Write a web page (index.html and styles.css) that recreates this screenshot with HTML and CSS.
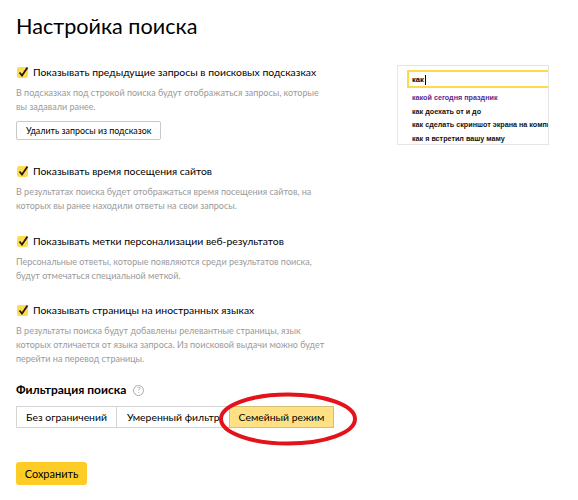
FILE: index.html
```html
<!DOCTYPE html>
<html lang="ru">
<head>
<meta charset="utf-8">
<link rel="stylesheet" href="styles.css">
</head>
<body>
<div class="page">
  <h1 class="title">Настройка поиска</h1>

  <div class="row-first">
    <div class="section s1">
      <label class="check">
        <svg class="box" width="14" height="14" viewBox="0 0 14 14"><rect x="1" y="2" width="11" height="11" rx="2" fill="#ffdb4d"/><path d="M3.5 7.5 L6 10.5 L11.5 2.5" fill="none" stroke="#1a1a1a" stroke-width="1.8"/></svg>
        <span>Показывать предыдущие запросы в поисковых подсказках</span>
      </label>
      <p class="desc">В подсказках под строкой поиска будут отображаться запросы, которые вы задавали ранее.</p>
      <button class="btn">Удалить запросы из подсказок</button>
    </div>
    <div class="suggest">
      <div class="suggest-input">как<span class="caret"></span></div>
      <ul class="suggest-list">
        <li class="visited">какой сегодня праздник</li>
        <li>как доехать от и до</li>
        <li>как сделать скриншот экрана на компьютере</li>
        <li>как я встретил вашу маму</li>
      </ul>
    </div>
  </div>

  <div class="section s2">
    <label class="check">
      <svg class="box" width="14" height="14" viewBox="0 0 14 14"><rect x="1" y="2" width="11" height="11" rx="2" fill="#ffdb4d"/><path d="M3.5 7.5 L6 10.5 L11.5 2.5" fill="none" stroke="#1a1a1a" stroke-width="1.8"/></svg>
      <span>Показывать время посещения сайтов</span>
    </label>
    <p class="desc">В результатах поиска будет отображаться время посещения сайтов, на которых вы ранее находили ответы на свои запросы.</p>
  </div>

  <div class="section s3">
    <label class="check">
      <svg class="box" width="14" height="14" viewBox="0 0 14 14"><rect x="1" y="2" width="11" height="11" rx="2" fill="#ffdb4d"/><path d="M3.5 7.5 L6 10.5 L11.5 2.5" fill="none" stroke="#1a1a1a" stroke-width="1.8"/></svg>
      <span>Показывать метки персонализации веб-результатов</span>
    </label>
    <p class="desc">Персональные ответы, которые появляются среди результатов поиска, будут отмечаться специальной меткой.</p>
  </div>

  <div class="section s4">
    <label class="check">
      <svg class="box" width="14" height="14" viewBox="0 0 14 14"><rect x="1" y="2" width="11" height="11" rx="2" fill="#ffdb4d"/><path d="M3.5 7.5 L6 10.5 L11.5 2.5" fill="none" stroke="#1a1a1a" stroke-width="1.8"/></svg>
      <span>Показывать страницы на иностранных языках</span>
    </label>
    <p class="desc">В результаты поиска будут добавлены релевантные страницы, язык которых отличается от языка запроса. Из поисковой выдачи можно будет перейти на перевод страницы.</p>
  </div>

  <div class="filter">
    <h2 class="filter-title">Фильтрация поиска <span class="help">?</span></h2>
    <div class="segments">
      <div class="seg seg-first">Без ограничений</div>
      <div class="seg seg-mid">Умеренный фильтр</div>
      <div class="seg seg-active">Семейный режим</div>
      <svg class="circle" width="140" height="56" viewBox="0 0 140 56"><ellipse cx="70" cy="28" rx="67" ry="24.5" fill="none" stroke="#e3121b" stroke-width="4"/></svg>
    </div>
  </div>

  <button class="save">Сохранить</button>
</div>
</body>
</html>
```

FILE: styles.css
```css
* { box-sizing: border-box; }
html, body { margin: 0; padding: 0; background: #fff; }
body {
  font-family: Lato, Roboto, "Liberation Sans", sans-serif;
  color: #000;
  width: 578px;
  height: 500px;
  overflow: hidden;
}
.page {
  padding: 12px 0 0 16px;
}
.title {
  margin: 0;
  font-size: 21.6px;
  font-weight: 400;
  line-height: 28px;
}
.row-first {
  display: flex;
  margin-top: 25px;
}
.section {
  width: 311px;
}
.s1 {
  flex: none;
  width: 305px;
}
.check {
  display: flex;
  align-items: center;
  height: 14px;
  font-size: 10.4px;
  line-height: 14px;
  white-space: nowrap;
}
.box {
  margin-right: 3px;
  flex: none;
}
.desc {
  margin: 7px 0 0;
  font-size: 9px;
  line-height: 14px;
  color: #9a9a9a;
}
.btn {
  margin-top: 7px;
  height: 19px;
  padding: 0 9px;
  font-family: inherit;
  font-size: 8.9px;
  color: #000;
  background: #fff;
  border: 1px solid #c9c9c9;
  border-radius: 2px;
}
.suggest {
  margin-left: auto;
  margin-right: 29px;
  margin-top: 0;
  width: 152px;
  height: 80px;
  border: 1px solid #e6e6e6;
  overflow: hidden;
  padding: 4px 0 0 9px;
  font-family: "Liberation Sans", Arial, sans-serif;
  font-weight: 700;
  font-size: 7.2px;
}
.suggest-input {
  height: 18px;
  border: 2px solid #ffd84d;
  border-right: none;
  padding: 2px 0 0 3px;
  font-size: 7.6px;
  color: #000;
  display: flex;
  align-items: center;
  line-height: 10px;
}
.caret {
  width: 1px;
  height: 10px;
  background: #000;
  margin-left: 1px;
}
.suggest-list {
  list-style: none;
  margin: 3px 0 0;
  padding: 0 0 0 5px;
  white-space: nowrap;
}
.suggest-list li {
  line-height: 13.5px;
  color: #111;
}
.suggest-list li.visited { color: #5a2b92; }
.s2 { margin-top: 19px; }
.s3 { margin-top: 21px; }
.s4 { margin-top: 20px; }
.filter { margin-top: 16px; }
.filter-title {
  margin: 0;
  font-size: 12px;
  font-weight: 700;
  line-height: 16px;
  display: flex;
  align-items: center;
}
.help {
  margin-left: 7px;
  width: 11px;
  height: 11px;
  border: 1px solid #aaa;
  border-radius: 50%;
  font-size: 8px;
  font-weight: 400;
  color: #aaa;
  display: inline-flex;
  align-items: center;
  justify-content: center;
  line-height: 1;
}
.segments {
  position: relative;
  display: flex;
  margin-top: 8px;
  height: 22px;
}
.seg {
  height: 22px;
  display: flex;
  align-items: center;
  padding: 0 10px;
  font-size: 10.4px;
  border: 1px solid #d4d4d4;
  background: #fff;
  white-space: nowrap;
}
.seg-first {
  width: 101px;
  justify-content: center;
  padding: 0;
}
.seg + .seg { margin-left: -1px; }
.seg-mid {
  width: 114px;
  overflow: hidden;
  padding-right: 0;
  justify-content: flex-start;
}
.seg-active {
  background: #ffe085;
  border-color: #d7bf72;
  position: relative;
  width: 105px;
  justify-content: center;
  padding: 0;
}
.circle {
  position: absolute;
  left: 202px;
  top: -15px;
}
.save {
  margin-top: 34px;
  height: 23px;
  width: 71px;
  padding: 0;
  font-family: inherit;
  font-size: 11px;
  color: #000;
  background: #fdcc26;
  border: none;
  border-radius: 3px;
}
```
